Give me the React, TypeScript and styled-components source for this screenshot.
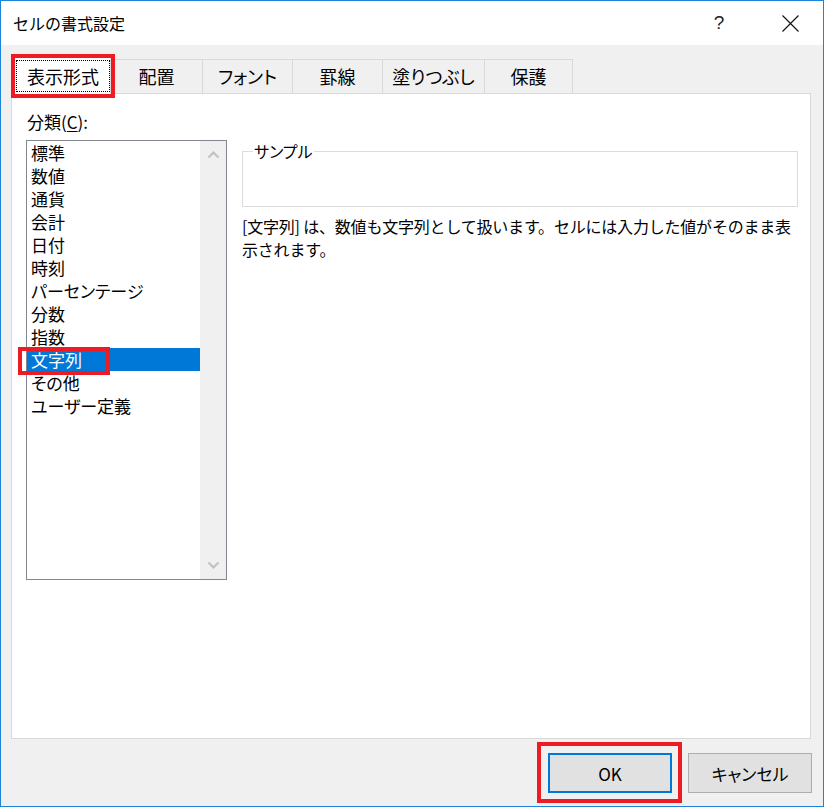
import React from 'react';
import styled, { createGlobalStyle } from 'styled-components';

const GlobalStyle = createGlobalStyle`
  html, body {
    margin: 0;
    padding: 0;
    background: #ffffff;
  }
  body {
    font-family: "Noto Sans CJK JP", "Noto Sans", sans-serif;
    color: #000000;
  }
`;

const categories = [
  '標準',
  '数値',
  '通貨',
  '会計',
  '日付',
  '時刻',
  'パーセンテージ',
  '分数',
  '指数',
  '文字列',
  'その他',
  'ユーザー定義',
];

const tabs = [
  { label: '表示形式', width: 98 },
  { label: '配置', width: 93 },
  { label: 'フォント', width: 91 },
  { label: '罫線', width: 91 },
  { label: '塗りつぶし', width: 103 },
  { label: '保護', width: 89 },
];

const Window = styled.div`
  width: 824px;
  height: 807px;
  box-sizing: border-box;
  border: 1px solid #1c84d8;
  display: flex;
  flex-direction: column;
  background: #f0f0f0;
`;

const TitleBar = styled.div`
  height: 44px;
  flex-shrink: 0;
  background: #ffffff;
  display: flex;
  align-items: center;
  padding: 0 10px 0 12px;
`;

const Title = styled.div`
  flex: 1;
  font-size: 16px;
  line-height: 20px;
  margin-top: -1px;
`;

const TitleButton = styled.div<{ $gap?: number }>`
  width: 46px;
  height: 30px;
  margin-right: ${(p) => p.$gap ?? 0}px;
  display: flex;
  align-items: center;
  justify-content: center;
  font-family: "Liberation Sans", sans-serif;
  font-size: 19px;
  color: #222;
`;

const Body = styled.div`
  flex: 1;
  display: flex;
  flex-direction: column;
  padding: 0 12px 13px 10px;
  min-height: 0;
`;

const TabStrip = styled.div`
  height: 34px;
  margin-top: 14px;
  padding-left: 2px;
  display: flex;
  align-items: flex-end;
  flex-shrink: 0;
`;

const Tab = styled.div<{ $active?: boolean; $width: number }>`
  position: relative;
  box-sizing: border-box;
  width: ${(p) => p.$width}px;
  height: ${(p) => (p.$active ? 37 : 34)}px;
  margin-bottom: ${(p) => (p.$active ? -1 : 0)}px;
  margin-left: -1px;
  &:first-child {
    margin-left: 0;
  }
  border: 1px solid #d9d9d9;
  border-bottom: none;
  background: ${(p) => (p.$active ? '#ffffff' : '#f0f0f0')};
  z-index: ${(p) => (p.$active ? 2 : 0)};
  display: flex;
  padding: ${(p) => (p.$active ? '2px 0 2px 2px' : '0')};
  font-size: 18px;
  font-feature-settings: "palt";
`;

const TabLabel = styled.div<{ $focus?: boolean }>`
  flex: 1;
  display: flex;
  align-items: center;
  justify-content: center;
  border: 1px dotted ${(p) => (p.$focus ? '#000' : 'transparent')};
  padding-bottom: 1px;
`;

const Highlight = styled.div<{ $l: number; $t: number; $w: number; $h: number }>`
  position: absolute;
  left: ${(p) => p.$l}px;
  top: ${(p) => p.$t}px;
  width: ${(p) => p.$w}px;
  height: ${(p) => p.$h}px;
  box-sizing: border-box;
  border: 4px solid #ed1c24;
  pointer-events: none;
  z-index: 3;
`;

const Panel = styled.div`
  flex: 1;
  background: #ffffff;
  border: 1px solid #d9d9d9;
  display: flex;
  gap: 15px;
  padding: 16px 12px 0 14px;
  min-height: 0;
`;

const LeftColumn = styled.div`
  width: 201px;
  flex-shrink: 0;
  display: flex;
  flex-direction: column;
`;

const FieldLabel = styled.div`
  font-size: 17px;
  line-height: 24px;
  margin-left: 1px;
  u {
    text-underline-offset: 2px;
  }
`;

const ListBox = styled.div`
  margin-top: 6px;
  height: 440px;
  box-sizing: border-box;
  border: 1px solid #828790;
  display: flex;
  background: #ffffff;
`;

const Items = styled.div`
  flex: 1;
  display: flex;
  flex-direction: column;
`;

const Item = styled.div<{ $selected?: boolean }>`
  position: relative;
  height: 23px;
  line-height: 23px;
  padding-left: 4px;
  font-size: 17px;
  font-feature-settings: "palt";
  background: ${(p) => (p.$selected ? '#0078d7' : 'transparent')};
  color: ${(p) => (p.$selected ? '#ffffff' : '#000000')};
`;

const ScrollBar = styled.div`
  width: 26px;
  background: #f0f0f0;
  display: flex;
  flex-direction: column;
  justify-content: space-between;
`;

const ScrollButton = styled.div`
  height: 28px;
  display: flex;
  align-items: center;
  justify-content: center;
`;

const RightColumn = styled.div`
  flex: 1;
  margin-top: 31px;
  display: flex;
  flex-direction: column;
  min-width: 0;
`;

const SampleBox = styled.fieldset`
  margin: 0;
  padding: 0 0 0 10px;
  border: 1px solid #dcdcdc;
  min-width: 0;
`;

const SampleLegend = styled.legend`
  padding: 0 1px;
  font-size: 16px;
  line-height: 20px;
  font-feature-settings: "palt";
`;

const SampleArea = styled.div`
  height: 45px;
`;

const Description = styled.p`
  margin: 8px 0 0 0;
  font-size: 16px;
  line-height: 23px;
  letter-spacing: -0.2px;
`;

const ButtonRow = styled.div`
  height: 40px;
  margin-top: 14px;
  margin-right: -1px;
  display: flex;
  justify-content: flex-end;
  gap: 16px;
  flex-shrink: 0;
`;

const Button = styled.div<{ $default?: boolean }>`
  position: relative;
  width: 124px;
  height: 40px;
  box-sizing: border-box;
  background: #e1e1e1;
  border: ${(p) => (p.$default ? '2px solid #0078d7' : '1px solid #adadad')};
  display: flex;
  align-items: center;
  justify-content: center;
  font-size: 17px;
  font-feature-settings: "palt";
`;

const Chevron = ({ down }: { down?: boolean }) => (
  <svg width="13" height="8" viewBox="0 0 13 8">
    <path
      d={down ? 'M1.5 1.5 L6.5 6.5 L11.5 1.5' : 'M1.5 6.5 L6.5 1.5 L11.5 6.5'}
      fill="none"
      stroke="#c2c2c2"
      strokeWidth="2.2"
    />
  </svg>
);

const CloseIcon = () => (
  <svg width="17" height="17" viewBox="0 0 17 17">
    <path d="M0.5 0.5 L16.5 16.5 M16.5 0.5 L0.5 16.5" stroke="#111" strokeWidth="1.1" />
  </svg>
);

const App = (): React.ReactElement => {
  return (
    <>
      <GlobalStyle />
      <Window>
        <TitleBar>
          <Title>セルの書式設定</Title>
          <TitleButton $gap={25}>?</TitleButton>
          <TitleButton>
            <CloseIcon />
          </TitleButton>
        </TitleBar>
        <Body>
          <TabStrip>
            {tabs.map((tab, i) => (
              <Tab key={tab.label} $active={i === 0} $width={tab.width}>
                <TabLabel $focus={i === 0}>{tab.label}</TabLabel>
                {i === 0 && <Highlight $l={-3} $t={-4} $w={104} $h={44} />}
              </Tab>
            ))}
          </TabStrip>
          <Panel>
            <LeftColumn>
              <FieldLabel>
                分類(<u>C</u>):
              </FieldLabel>
              <ListBox>
                <Items>
                  {categories.map((c) => (
                    <Item key={c} $selected={c === '文字列'}>
                      {c}
                      {c === '文字列' && <Highlight $l={-9} $t={-1} $w={92} $h={28} />}
                    </Item>
                  ))}
                </Items>
                <ScrollBar>
                  <ScrollButton>
                    <Chevron />
                  </ScrollButton>
                  <ScrollButton>
                    <Chevron down />
                  </ScrollButton>
                </ScrollBar>
              </ListBox>
            </LeftColumn>
            <RightColumn>
              <SampleBox>
                <SampleLegend>サンプル</SampleLegend>
                <SampleArea />
              </SampleBox>
              <Description>
                [文字列] は、数値も文字列として扱います。セルには入力した値がそのまま表示されます。
              </Description>
            </RightColumn>
          </Panel>
          <ButtonRow>
            <Button $default>
              OK
              <Highlight $l={-13} $t={-13} $w={145} $h={61} />
            </Button>
            <Button>キャンセル</Button>
          </ButtonRow>
        </Body>
      </Window>
    </>
  );
};

export default App;
